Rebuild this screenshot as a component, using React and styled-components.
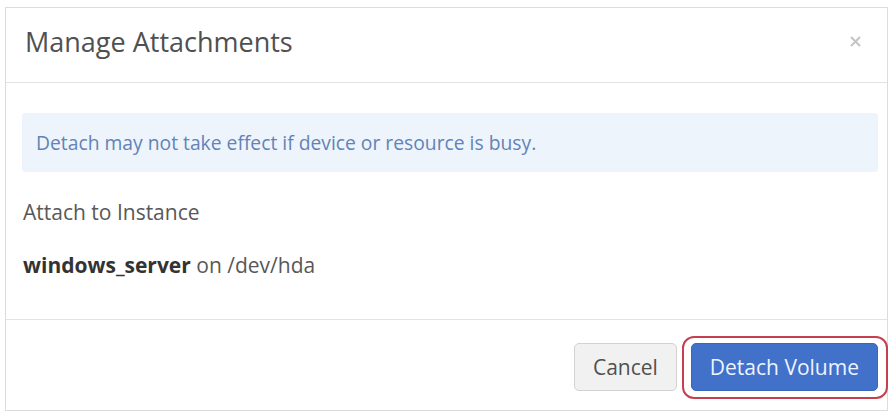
import React from "react";
import styled, { createGlobalStyle } from "styled-components";

const Global = createGlobalStyle`
  html, body { margin: 0; padding: 0; background: #ffffff; }
  body { font-family: "Open Sans", "Liberation Sans", sans-serif; }
  * { box-sizing: border-box; }
`;

const Modal = styled.div`
  margin: 7px 0 0 5px;
  width: 883px;
  height: 404px;
  border: 1px solid #dcdcdc;
  background: #fff;
  display: flex;
  flex-direction: column;
`;

const Header = styled.div`
  height: 75px;
  padding: 0 25px 6px 19px;
  display: flex;
  align-items: center;
  justify-content: space-between;
  border-bottom: 1px solid #e3e3e3;
`;

const Title = styled.h4`
  margin: 0;
  font-size: 27px;
  line-height: 36px;
  font-weight: 400;
  color: #505050;
`;

const Close = styled.button`
  border: 0;
  background: none;
  padding: 0;
  width: 14px;
  height: 14px;
  margin-bottom: 2px;
  display: flex;
  align-items: center;
  justify-content: center;
  cursor: pointer;
`;

const Body = styled.div`
  padding: 30px 9px 0 16px;
  flex: 1;
`;

const Alert = styled.div`
  height: 59px;
  padding: 0 14px;
  display: flex;
  align-items: center;
  background: #eef4fb;
  border-radius: 3px;
  color: #6283b8;
  font-size: 19.3px;
`;

const Line = styled.p`
  margin: ${(p) => p.$gap}px 0 0 1px;
  line-height: 28px;
  font-size: 21px;
  color: #585858;
`;

const Strong = styled.b`
  font-weight: 700;
  color: #333;
`;

const Footer = styled.div`
  border-top: 1px solid #e3e3e3;
  padding: 23px 9px 19px 0;
  display: flex;
  justify-content: flex-end;
  gap: 14px;
`;

const Button = styled.button`
  height: 48px;
  padding: 0 ${(p) => p.$pad}px;
  border-radius: 5px;
  font-family: "Open Sans", "Liberation Sans", sans-serif;
  font-size: 21px;
  position: relative;
  border: 1px solid ${(p) => (p.$primary ? "#3a66bb" : "#d2d2d2")};
  background: ${(p) => (p.$primary ? "#4171c9" : "#f1f1f1")};
  color: ${(p) => (p.$primary ? "#eef3ff" : "#505050")};
`;

const Ring = styled.span`
  position: absolute;
  top: -8px;
  bottom: -9px;
  left: -10px;
  right: -11px;
  border: 2px solid #c5404f;
  border-radius: 12px;
  pointer-events: none;
`;

export default function App() {
  return (
    <>
      <Global />
      <Modal>
        <Header>
          <Title>Manage Attachments</Title>
          <Close aria-label="Close">
            <svg width="11" height="11" viewBox="0 0 11 11">
              <path d="M1 1 L10 10 M10 1 L1 10" stroke="#c4c4c4" strokeWidth="2" />
            </svg>
          </Close>
        </Header>
        <Body>
          <Alert>Detach may not take effect if device or resource is busy.</Alert>
          <Line $gap={26}>Attach to Instance</Line>
          <Line $gap={25}>
            <Strong>windows_server</Strong> on /dev/hda
          </Line>
        </Body>
        <Footer>
          <Button $pad={18}>Cancel</Button>
          <Button $primary $pad={18}>
            Detach Volume
            <Ring />
          </Button>
        </Footer>
      </Modal>
    </>
  );
}
